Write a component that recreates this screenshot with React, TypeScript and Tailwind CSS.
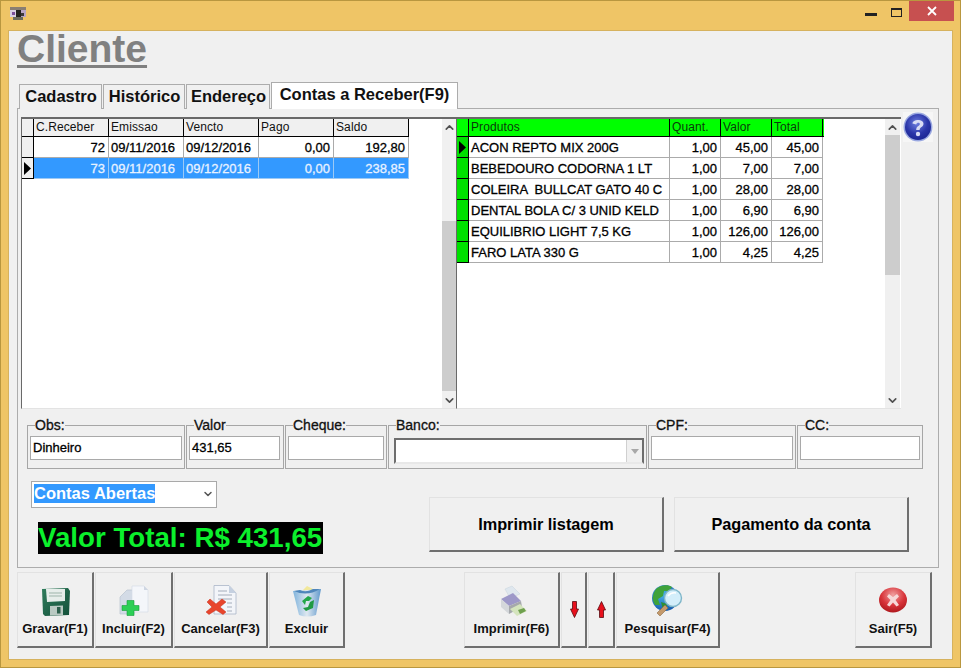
import { ChevronDown, ChevronUp } from "lucide-react";
import type { ReactNode } from "react";

const boldText = "[-webkit-text-stroke:0.3px_currentColor]";

const contas = [
  { id: "72", emissao: "09/11/2016", vencto: "09/12/2016", pago: "0,00", saldo: "192,80" },
  { id: "73", emissao: "09/11/2016", vencto: "09/12/2016", pago: "0,00", saldo: "238,85" },
];

const produtos = [
  ["ACON REPTO MIX 200G", "1,00", "45,00", "45,00"],
  ["BEBEDOURO CODORNA 1 LT", "1,00", "7,00", "7,00"],
  ["COLEIRA  BULLCAT GATO 40 C", "1,00", "28,00", "28,00"],
  ["DENTAL BOLA C/ 3 UNID KELD", "1,00", "6,90", "6,90"],
  ["EQUILIBRIO LIGHT 7,5 KG", "1,00", "126,00", "126,00"],
  ["FARO LATA 330 G", "1,00", "4,25", "4,25"],
];

const Triangle = () => (
  <svg width="7" height="13" viewBox="0 0 7 13">
    <path d="M0 0 L7 6.5 L0 13 Z" fill="#000" />
  </svg>
);

const AppIcon = () => (
  <svg width="16" height="14" viewBox="0 0 16 14" shapeRendering="crispEdges">
    <rect x="0" y="0" width="16" height="3" fill="#8a7f72" />
    <rect x="0" y="3" width="6" height="7" fill="#d9cfe2" />
    <rect x="6" y="3" width="5" height="8" fill="#23231f" />
    <rect x="11" y="3" width="5" height="7" fill="#b9a6c4" />
    <rect x="2" y="5" width="3" height="3" fill="#7a4f9a" />
    <rect x="11" y="6" width="3" height="3" fill="#3c3a3a" />
    <rect x="3" y="10" width="10" height="3" fill="#6b6b5c" />
  </svg>
);

const HelpIcon = () => (
  <svg width="30" height="30" viewBox="0 0 30 30">
    <defs>
      <radialGradient id="helpBall" cx="0.45" cy="0.35" r="0.7">
        <stop offset="0" stopColor="#6f7fe0" />
        <stop offset="0.6" stopColor="#2a35a8" />
        <stop offset="1" stopColor="#1a2490" />
      </radialGradient>
    </defs>
    <circle cx="15" cy="15" r="14.5" fill="#9aa8e0" />
    <circle cx="15" cy="15" r="13" fill="url(#helpBall)" />
    <path d="M9.5 11.5 C9.5 7 20.5 6.5 20.5 11.8 C20.5 15.2 16.6 15 16.6 18 L13.2 18 C13.2 13.8 16.8 14.2 16.8 12 C16.8 10.2 13.4 10.4 13.2 12.4 Z" fill="#d9dcf5" />
    <circle cx="15" cy="22" r="2.2" fill="#d9dcf5" />
  </svg>
);

const FloppyIcon = () => (
  <svg width="32" height="32" viewBox="0 0 32 32">
    <defs>
      <linearGradient id="floppyBody" x1="0" y1="0" x2="1" y2="1">
        <stop offset="0" stopColor="#2f7d5c" />
        <stop offset="1" stopColor="#14503a" />
      </linearGradient>
    </defs>
    <path d="M3 4 L29 3 L31 6 L30 30 L6 31 L4 29 Z" fill="url(#floppyBody)" />
    <path d="M7 4 L26 4 L26 16 L8 17 Z" fill="#e6eeea" />
    <path d="M10 8 H23 M10 11 H23" stroke="#9db5aa" strokeWidth="1" />
    <path d="M11 21 L24 20.5 L24 30 L11 30.5 Z" fill="#b9c9c2" />
    <rect x="18" y="22" width="3.5" height="6.5" fill="#2c5f4c" />
  </svg>
);

const IncluirIcon = () => (
  <svg width="32" height="32" viewBox="0 0 32 32">
    <path d="M2 12 L9 5 L16 5 L16 29 L2 29 Z" fill="#d3dbe6" stroke="#b9c3d0" strokeWidth="0.7" />
    <path d="M14 1 L26 1 L30 5 L30 27 L14 27 Z" fill="#f4f6fa" stroke="#d6dce6" strokeWidth="0.7" />
    <path d="M26 1 L26 5 L30 5 Z" fill="#cfd6e2" />
    <path d="M8 17 H15 V22 H20 V27 H15 V32 H8 V27 H3 V22 H8 Z" fill="#2ccf55" stroke="#1a9c3c" strokeWidth="0.6" transform="translate(1 -1.5)" />
  </svg>
);

const CancelarIcon = () => (
  <svg width="32" height="32" viewBox="0 0 32 32">
    <path d="M9 0.5 L24 0.5 L31 8 L31 29 L9 29 Z" fill="#f3f5f9" stroke="#a9b5c8" strokeWidth="0.8" />
    <path d="M24 0.5 L24 8 L31 8 Z" fill="#c5d0e0" />
    <path d="M13 6 H22 M13 10 H27 M13 14 H27 M22 18 H27 M22 22 H27 M22 26 H27" stroke="#a4adbb" strokeWidth="1" />
    <path d="M2 17 L5 14 L11 19 L17 14 L21 17 L15 22 L21 27 L18 29.5 L11 25 L4 29.5 L1 27 L7 22 Z" fill="#e8452c" stroke="#c4301e" strokeWidth="0.5" />
  </svg>
);

const LixeiraIcon = () => (
  <svg width="32" height="32" viewBox="0 0 32 32">
    <defs>
      <linearGradient id="binBody" x1="0" y1="0" x2="1" y2="0">
        <stop offset="0" stopColor="#7fb3dc" />
        <stop offset="0.5" stopColor="#dfe8f0" />
        <stop offset="1" stopColor="#5f98cc" />
      </linearGradient>
    </defs>
    <path d="M11 6 L16 1 L22 4 L19 8 Z" fill="#f2e89a" />
    <path d="M2 6 L30 4 L25 30 Q16 33 8 30 Z" fill="url(#binBody)" />
    <path d="M3 6 Q16 12 29 4 L22 4 Q15 8 9 5 Z" fill="#4f86bb" />
    <path d="M11 16 L17 11 L21 13 L18 16 L15 16 L14 20 Z" fill="#23a84a" />
    <path d="M23 15 L22 23 L15 26 L12 23 L17 22 L19 17 Z" fill="#1f9a43" />
  </svg>
);

const PrinterIcon = () => (
  <svg width="32" height="32" viewBox="0 0 32 32">
    <path d="M9 4 L16 1 L24 9 L14 13 Z" fill="#dfe7ee" stroke="#c7d2dc" strokeWidth="0.5" />
    <path d="M5 14 L17 8 L25 16 L13 21 Z" fill="#9d98c8" />
    <path d="M5 14 L13 21 L13 29 L5 22 Z" fill="#d4d7da" />
    <path d="M13 21 L25 16 L26 22 L13 29 Z" fill="#a5a8ac" />
    <path d="M14 24 L24 19 L31 26 L21 31 Z" fill="#d4e4bd" />
    <path d="M22 25 L28 23 L30 26 L24 29 Z" fill="#6fa04f" />
  </svg>
);

const GlobeIcon = () => (
  <svg width="32" height="32" viewBox="0 0 32 32">
    <defs>
      <radialGradient id="globeSea" cx="0.4" cy="0.35" r="0.75">
        <stop offset="0" stopColor="#4db5ea" />
        <stop offset="1" stopColor="#0d4fa6" />
      </radialGradient>
    </defs>
    <circle cx="13" cy="13" r="13" fill="url(#globeSea)" />
    <path d="M4 4 C8 0 16 -1 20 2 L17 6 L12 6 L11 11 L6 14 L8 20 L3 20 Q-2 12 4 4 Z" fill="#3fa23a" />
    <path d="M9 17 L15 19 L14 25 L11 25 Z" fill="#2f8f35" />
    <path d="M5 28 L13 20 L16 23 L8 31 Z" fill="#c49a6c" stroke="#8d6a45" strokeWidth="0.6" />
    <circle cx="21" cy="13" r="8.5" fill="#d3eefa" stroke="#7fb6c9" strokeWidth="1.4" />
    <path d="M16 11 Q19 7 24 8" stroke="#fff" strokeWidth="1.6" fill="none" />
  </svg>
);

const SairIcon = () => (
  <svg width="32" height="32" viewBox="0 0 32 32">
    <defs>
      <radialGradient id="sairBall" cx="0.5" cy="0.3" r="0.75">
        <stop offset="0" stopColor="#f0a0a0" />
        <stop offset="0.55" stopColor="#d8343a" />
        <stop offset="1" stopColor="#a81419" />
      </radialGradient>
    </defs>
    <ellipse cx="16" cy="15" rx="14" ry="12.5" fill="url(#sairBall)" />
    <path d="M12 9 L16 12 L20 9 L22 11.5 L18.5 15 L22 20 L19.5 21.5 L16 17.5 L12.5 21.5 L10 20 L13.5 15 L10 11.5 Z" fill="#f6d8d8" />
  </svg>
);

const ArrowDown = () => (
  <svg width="9" height="17" viewBox="0 0 9 17">
    <path d="M2.5 0.5 H6.5 V8 H8.5 L4.5 16.5 L0.5 8 H2.5 Z" fill="#e8101c" stroke="#5a0a10" strokeWidth="0.8" />
  </svg>
);

const ArrowUp = () => (
  <svg width="9" height="17" viewBox="0 0 9 17">
    <path d="M2.5 16.5 H6.5 V9 H8.5 L4.5 0.5 L0.5 9 H2.5 Z" fill="#e8101c" stroke="#5a0a10" strokeWidth="0.8" />
  </svg>
);

const ToolButton = ({ label, width, icon }: { label: string; width: string; icon: ReactNode }) => (
  <button className={`${width} h-[76px] flex flex-col items-center pt-[12px] bg-[#f0f0f0] border-t border-l border-[#e2e2e2] border-r-2 border-b-2 border-r-[#6f6f6f] border-b-[#6f6f6f]`}>
    <span className="h-[32px] flex items-center justify-center">{icon}</span>
    <span className="mt-[4px] text-[13px] leading-[16px] font-bold text-[#111] whitespace-nowrap">{label}</span>
  </button>
);

const ActionButton = ({ label, className }: { label: string; className?: string }) => (
  <button className={`w-[235px] h-[55px] bg-[#f0f0f0] border-t border-l border-[#e2e2e2] border-r-2 border-b-2 border-r-[#6f6f6f] border-b-[#6f6f6f] text-[16.3px] font-bold text-black ${className ?? ""}`}>
    {label}
  </button>
);

const Scrollbar = ({ width, thumbTop, thumbHeight }: { width: string; thumbTop: string; thumbHeight: string }) => (
  <div className={`${width} h-full flex flex-col bg-[#f0f0f0] shrink-0`}>
    <div className="h-[16px] flex items-center justify-center">
      <ChevronUp size={13} strokeWidth={3} className="text-[#505050]" />
    </div>
    <div className={`${thumbTop} ${thumbHeight} bg-[#cdcdcd]`} />
    <div className="mt-auto h-[16px] flex items-center justify-center">
      <ChevronDown size={13} strokeWidth={3} className="text-[#505050]" />
    </div>
  </div>
);

const Group = ({ label, width, children }: { label: string; width: string; children?: ReactNode }) => (
  <fieldset className={`${width} h-[51px] min-w-0 border border-[#a6a6a6] px-[2px] shrink-0`}>
    <legend className={`ml-[5px] px-0 text-[14px] leading-[15px] text-[#111] ${boldText}`}>{label}</legend>
    {children}
  </fieldset>
);

const Field = ({ value, className }: { value?: string; className?: string }) => (
  <div className={`mt-[3px] h-[24px] bg-white border border-[#a9a9a9] px-[2px] text-[13px] leading-[22px] text-black ${boldText} ${className ?? ""}`}>
    {value}
  </div>
);

const App = () => {
  return (
    <div className="w-[961px] h-[668px] overflow-hidden flex flex-col bg-[#efc566] border border-[#b9973f] font-['Liberation_Sans',Arial,sans-serif]">
      {/* title bar */}
      <div className="h-[29px] shrink-0 flex items-start pl-[9px] pr-[6px]">
        <div className="mt-[6px]">
          <AppIcon />
        </div>
        <div className="ml-auto h-[20px] flex items-start">
          <div className="w-[12px] h-[3px] mt-[12px] bg-[#222]" />
          <div className="w-[11px] h-[9px] mt-[7px] ml-[14px] border border-t-2 border-[#222]" />
          <div className="ml-[7px] w-[45px] h-[20px] bg-[#c75050] flex items-center justify-center">
            <svg width="10" height="10" viewBox="0 0 10 10">
              <path d="M1 1 L9 9 M9 1 L1 9" stroke="#fff" strokeWidth="1.8" />
            </svg>
          </div>
        </div>
      </div>

      {/* client area */}
      <div className="flex-1 mx-[7px] mb-[7px] bg-[#f0f0f0] border border-[#d6b25e] flex flex-col">
        <h1 className="ml-[8px] h-[39px] text-[39px] leading-[36px] font-bold text-[#808080] underline decoration-[3px] underline-offset-[3px]">
          Cliente
        </h1>

        {/* tabs */}
        <div className="mt-[12px] ml-[10px] h-[27px] flex items-end gap-px relative z-10">
          {[
            ["Cadastro", "w-[83px]"],
            ["Histórico", "w-[82px]"],
            ["Endereço", "w-[84px]"],
          ].map(([label, width]) => (
            <div key={label} className={`${width} h-[25px] pt-[1px] pl-[1px] text-center text-[16.5px] leading-[20px] font-bold text-[#111] bg-[#f0f0f0] border border-b-0 border-[#acacac] whitespace-nowrap`}>
              {label}
            </div>
          ))}
          <div className="w-[187px] h-[27px] pt-[1px] text-center text-[16.5px] leading-[20px] font-bold text-[#111] bg-white border border-b-0 border-[#acacac]">
            Contas a Receber(F9)
          </div>
        </div>

        {/* page */}
        <div className="ml-[8px] w-[922px] h-[460px] -mt-[1px] border border-[#acacac] flex flex-col">
          <div className="mt-[8px] ml-[3px] h-[292px] flex items-start">
            {/* contas */}
            <div className="w-[435px] h-[292px] bg-white border-t-2 border-l border-b border-[#696969] border-b-[#e3e3e3] flex">
              <div className="w-[387px] flex-none mr-[33px] text-[#111]">
                <div className="flex h-[18px] bg-[#f0f0f0] text-[12px] leading-[17px] tracking-[0.1px] border-b border-black">
                  <div className="w-[12px] border-r border-black" />
                  {["C.Receber", "Emissao", "Vencto", "Pago", "Saldo"].map((col) => (
                    <div key={col} className="w-[75px] pl-[2px] border-r border-black">
                      {col}
                    </div>
                  ))}
                </div>
                {contas.map((c, i) => {
                  const selected = i === 1;
                  const row = selected ? "bg-[#3399ff] text-[#e8f2ff]" : "bg-white text-black";
                  const line = selected ? "border-[#9cc9f5]" : "border-[#ababab]";
                  return (
                    <div key={c.id} className={`flex h-[21px] text-[13px] leading-[19px] ${boldText} ${row}`}>
                      <div className="w-[12px] bg-[#f0f0f0] border-r border-b border-black flex items-center justify-center">
                        {selected && <Triangle />}
                      </div>
                      <div className={`w-[75px] pt-[1px] pr-[3px] text-right border-r border-b ${line}`}>{c.id}</div>
                      <div className={`w-[75px] pt-[1px] pl-[2px] border-r border-b ${line}`}>{c.emissao}</div>
                      <div className={`w-[75px] pt-[1px] pl-[2px] border-r border-b ${line}`}>{c.vencto}</div>
                      <div className={`w-[75px] pt-[1px] pr-[3px] text-right border-r border-b ${line}`}>{c.pago}</div>
                      <div className={`w-[75px] pt-[1px] pr-[3px] text-right border-r border-b ${line}`}>{c.saldo}</div>
                    </div>
                  );
                })}
              </div>
              <Scrollbar width="w-[14px]" thumbTop="mt-[86px]" thumbHeight="h-[170px]" />
            </div>

            {/* produtos */}
            <div className="w-[445px] h-[292px] bg-white border-t-2 border-l border-b border-[#696969] border-b-[#e3e3e3] flex shrink-0">
              <div className="w-[367px] flex-none mr-[61px]">
                <div className="flex h-[18px] bg-[#00ff00] text-[12px] leading-[17px] tracking-[0.1px] text-[#0a3a0a] border-b border-black">
                  <div className="w-[12px] border-r border-black" />
                  <div className="w-[201px] pl-[2px] border-r border-black">Produtos</div>
                  {["Quant.", "Valor", "Total"].map((col) => (
                    <div key={col} className="w-[51px] pl-[2px] border-r border-black">
                      {col}
                    </div>
                  ))}
                </div>
                {produtos.map((p, i) => (
                  <div key={p[0]} className={`flex h-[21px] text-[13px] leading-[19px] text-black ${boldText}`}>
                    <div className="w-[12px] bg-[#00e000] border-r border-b border-black flex items-center justify-center">
                      {i === 0 && <Triangle />}
                    </div>
                    <div className="w-[201px] pt-[1px] pl-[2px] border-r border-b border-[#ababab] whitespace-pre">{p[0]}</div>
                    {p.slice(1).map((v, j) => (
                      <div key={j} className="w-[51px] pt-[1px] pr-[3px] text-right border-r border-b border-[#ababab]">
                        {v}
                      </div>
                    ))}
                  </div>
                ))}
              </div>
              <Scrollbar width="w-[15px]" thumbTop="mt-0" thumbHeight="h-[140px]" />
            </div>

            <div className="-mt-[5px] ml-[2px] bg-[#f6f6f6]">
              <HelpIcon />
            </div>
          </div>

          {/* dados do pagamento */}
          <div className="mt-[9px] ml-[9px] flex gap-px">
            <Group label="Obs:" width="w-[158px]">
              <Field value="Dinheiro" />
            </Group>
            <Group label="Valor" width="w-[98px]">
              <Field value="431,65" className="w-[91px]" />
            </Group>
            <Group label="Cheque:" width="w-[102px]">
              <Field />
            </Group>
            <Group label="Banco:" width="w-[259px]">
              <div className="mt-[5px] ml-[3px] w-[250px] h-[26px] bg-white border-2 border-[#6e6e6e] border-b-[#e8e8e8] flex justify-end">
                <div className="w-[16px] h-[22px] bg-[#f0f0f0] border-l border-[#d0d0d0] flex items-center justify-center">
                  <svg width="8" height="5" viewBox="0 0 8 5">
                    <path d="M0 0 H8 L4 5 Z" fill="#a8a8a8" />
                  </svg>
                </div>
              </div>
            </Group>
            <Group label="CPF:" width="w-[148px]">
              <Field />
            </Group>
            <Group label="CC:" width="w-[126px]">
              <Field />
            </Group>
          </div>

          <div className="ml-[9px] flex items-start">
            <div className="w-[402px]">
              <div className="mt-[12px] ml-[4px] w-[186px] h-[27px] pb-[2px] bg-white border border-[#a9a9a9] flex items-center pl-[2px] pr-[2px]">
                <span className="bg-[#3399ff] text-white text-[16.5px] leading-[19px] font-bold">Contas Abertas</span>
                <ChevronDown size={12} strokeWidth={3} className="ml-auto text-[#555]" />
              </div>
              <div className="mt-[14px] ml-[11px] w-[285px] h-[32px] bg-black text-[#0bf02c] text-[27.7px] leading-[32px] font-bold whitespace-nowrap">
                Valor Total: R$ 431,65
              </div>
            </div>
            <div className="mt-[28px] flex gap-[10px]">
              <ActionButton label="Imprimir listagem" />
              <ActionButton label="Pagamento da conta" />
            </div>
          </div>
        </div>

        {/* barra de botoes */}
        <div className="mt-[4px] ml-[8px] flex gap-px">
          <ToolButton label="Gravar(F1)" width="w-[77px]" icon={<FloppyIcon />} />
          <ToolButton label="Incluir(F2)" width="w-[78px]" icon={<IncluirIcon />} />
          <ToolButton label="Cancelar(F3)" width="w-[94px]" icon={<CancelarIcon />} />
          <ToolButton label="Excluir" width="w-[76px]" icon={<LixeiraIcon />} />
          <div className="w-[117px]" />
          <ToolButton label="Imprimir(F6)" width="w-[96px]" icon={<PrinterIcon />} />
          <button className="w-[26px] h-[76px] pl-[1px] flex items-center justify-center bg-[#f0f0f0] border-t border-l border-[#e2e2e2] border-r-2 border-b-2 border-r-[#6f6f6f] border-b-[#6f6f6f]">
            <ArrowDown />
          </button>
          <button className="w-[27px] h-[76px] pl-[1px] flex items-center justify-center bg-[#f0f0f0] border-t border-l border-[#e2e2e2] border-r-2 border-b-2 border-r-[#6f6f6f] border-b-[#6f6f6f]">
            <ArrowUp />
          </button>
          <ToolButton label="Pesquisar(F4)" width="w-[104px]" icon={<GlobeIcon />} />
          <div className="w-[133px]" />
          <ToolButton label="Sair(F5)" width="w-[77px]" icon={<SairIcon />} />
        </div>
      </div>
    </div>
  );
};

export default App;
